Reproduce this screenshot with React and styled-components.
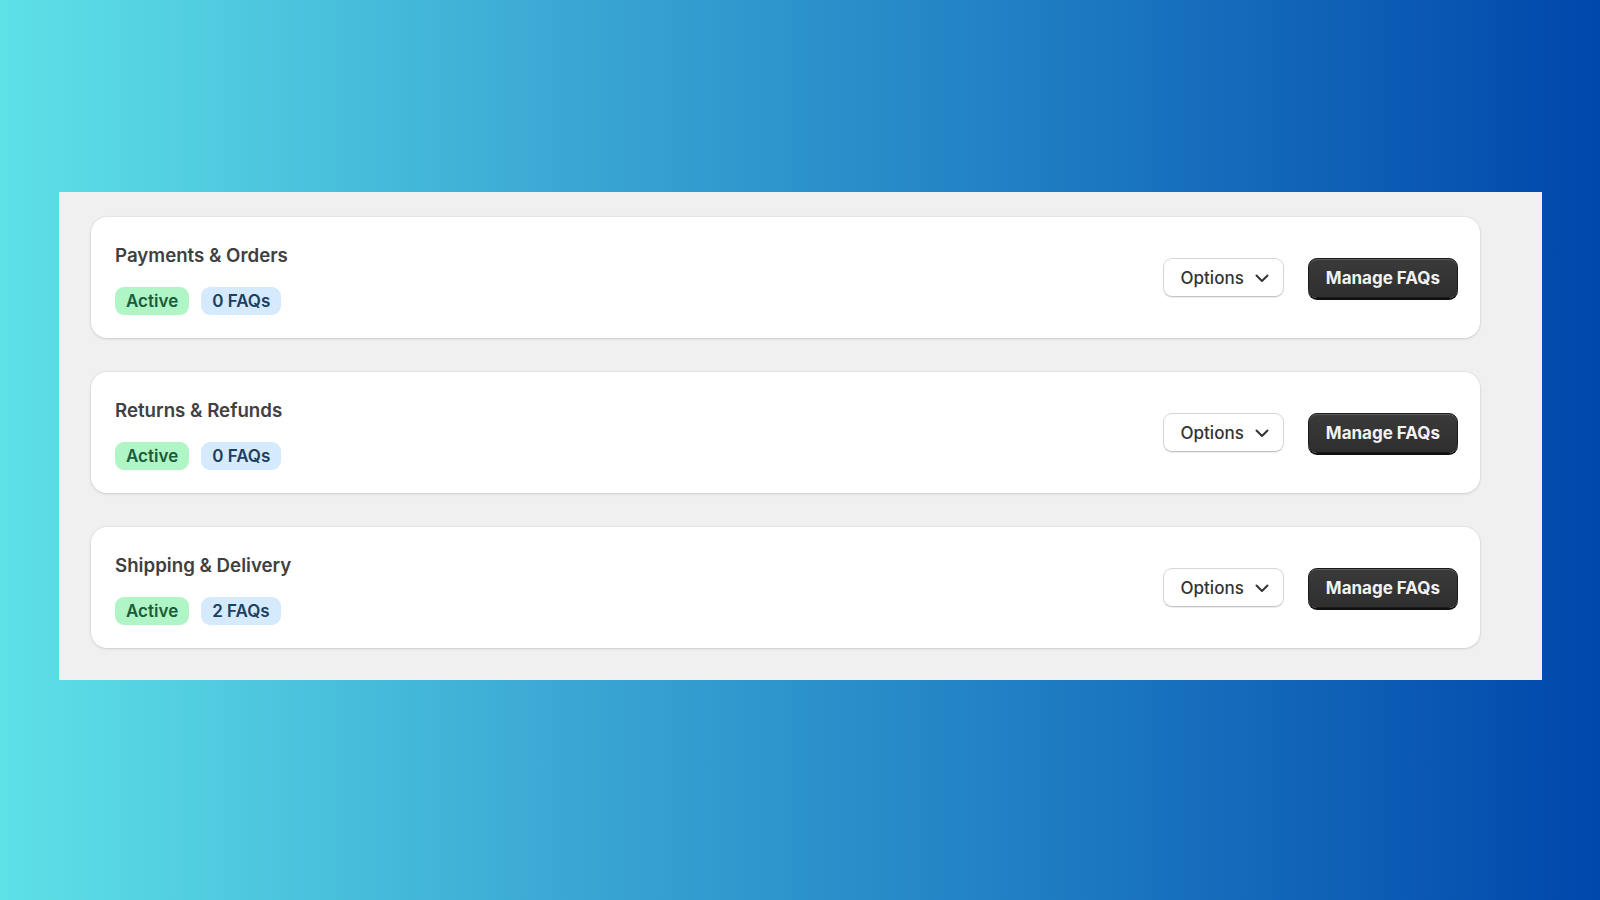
import React from 'react';
import styled, { createGlobalStyle } from 'styled-components';

const GlobalStyle = createGlobalStyle`
  html, body {
    margin: 0;
    padding: 0;
  }
  body {
    font-family: Inter, "Noto Sans", "Liberation Sans", sans-serif;
    -webkit-font-smoothing: antialiased;
  }
`;

const Page = styled.div`
  width: 1600px;
  height: 900px;
  background: linear-gradient(90deg, #5ee1e7 0%, #3aa8d4 35%, #1f7dc3 65%, #0047ab 100%);
  padding-top: 192px;
  padding-left: 59px;
  box-sizing: border-box;
`;

const Panel = styled.section`
  width: 1483px;
  background: #f0f0f0;
  padding: 25px 62px 32px 32px;
  box-sizing: border-box;
  display: flex;
  flex-direction: column;
  gap: 34px;
`;

const Card = styled.div`
  background: #fff;
  border-radius: 16px;
  box-shadow: 0 1px 3px rgba(0, 0, 0, 0.12), 0 0 0 1px rgba(0, 0, 0, 0.03);
  height: 121px;
  padding: 0 22px 0 24px;
  box-sizing: border-box;
  display: flex;
  align-items: center;
  justify-content: space-between;
`;

const Info = styled.div`
  display: flex;
  flex-direction: column;
  gap: 19px;
  padding-top: 3px;
`;

const Title = styled.h3`
  margin: 0;
  font-size: 18.7px;
  line-height: 24px;
  font-weight: 600;
  color: #404040;
`;

const Badges = styled.div`
  display: flex;
  gap: 12px;
`;

const Badge = styled.span`
  display: inline-flex;
  align-items: center;
  height: 28px;
  padding: 0 11px;
  border-radius: 9px;
  font-size: 17px;
  font-weight: 600;
  background: ${p => (p.$tone === 'green' ? '#aff5c6' : '#d5eafd')};
  color: ${p => (p.$tone === 'green' ? '#1b5b3a' : '#1b4060')};
`;

const Actions = styled.div`
  display: flex;
  align-items: center;
  gap: 24px;
`;

const OptionsButton = styled.button`
  display: inline-flex;
  align-items: center;
  gap: 11px;
  height: 39px;
  padding: 0 14px 0 17px;
  border: 1px solid #d6d6d6;
  border-bottom-color: #c4c4c4;
  border-radius: 9px;
  background: #fff;
  box-shadow: 0 1px 1px rgba(0, 0, 0, 0.08);
  font-family: inherit;
  font-size: 17px;
  font-weight: 500;
  color: #333;
  cursor: pointer;
`;

const ManageButton = styled.button`
  height: 40px;
  padding: 0 17px;
  border: 1px solid #1a1a1a;
  border-radius: 9px;
  background: linear-gradient(180deg, #3a3a3a 0%, #2f2f2f 100%);
  box-shadow: inset 0 1px 0 rgba(255, 255, 255, 0.18), 0 2px 0 #111;
  font-family: inherit;
  font-size: 17px;
  font-weight: 700;
  color: #f2f2f2;
  cursor: pointer;
`;

const Chevron = () => (
  <svg width="14" height="14" viewBox="0 0 14 14" fill="none">
    <path d="M1.5 4.5l5.5 5.5 5.5-5.5" stroke="#333" strokeWidth="2" strokeLinecap="round" strokeLinejoin="round" />
  </svg>
);

const categories = [
  { name: 'Payments & Orders', faqs: 0 },
  { name: 'Returns & Refunds', faqs: 0 },
  { name: 'Shipping & Delivery', faqs: 2 },
];

const App = () => (
  <>
    <GlobalStyle />
    <Page>
      <Panel>
        {categories.map(c => (
          <Card key={c.name}>
            <Info>
              <Title>{c.name}</Title>
              <Badges>
                <Badge $tone="green">Active</Badge>
                <Badge $tone="blue">{c.faqs} FAQs</Badge>
              </Badges>
            </Info>
            <Actions>
              <OptionsButton>
                Options
                <Chevron />
              </OptionsButton>
              <ManageButton>Manage FAQs</ManageButton>
            </Actions>
          </Card>
        ))}
      </Panel>
    </Page>
  </>
);

export default App;
